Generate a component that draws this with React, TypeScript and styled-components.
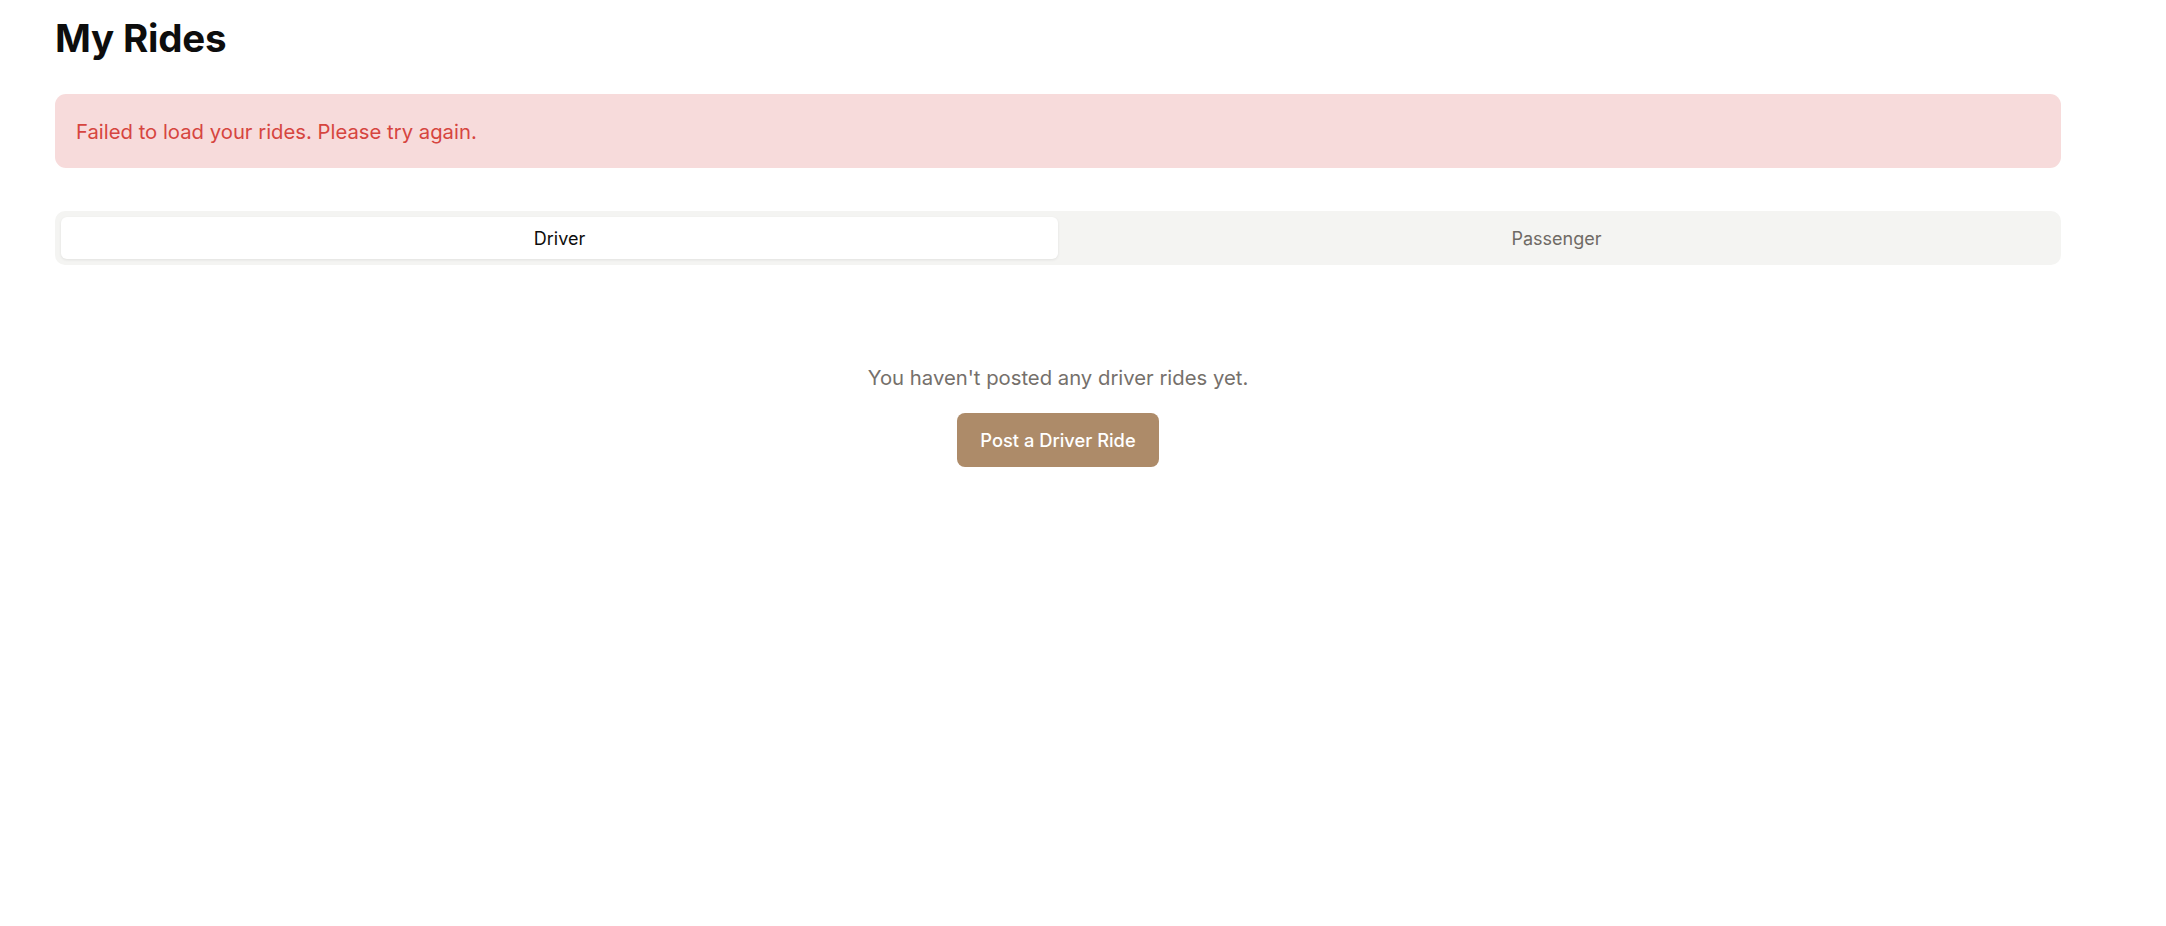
import React, { useState } from "react";
import styled, { createGlobalStyle } from "styled-components";

const GlobalStyle = createGlobalStyle`
  body {
    margin: 0;
    background: #ffffff;
    font-family: Inter, "Noto Sans", sans-serif;
    color: #111111;
  }
`;

const Page = styled.div`
  width: 2006px;
  margin-left: 55px;
  padding-top: 12px;
  display: flex;
  flex-direction: column;
`;

const Title = styled.h1`
  font-size: 38.5px;
  font-weight: 700;
  line-height: 52px;
  margin: 0 0 30px 0;
  color: #0d0d0d;
  letter-spacing: -0.2px;
`;

const ErrorBox = styled.div`
  background: #f7dbdb;
  color: #d6453f;
  border-radius: 11px;
  height: 74px;
  padding: 0 21px;
  display: flex;
  align-items: center;
  font-size: 20.3px;
  margin-bottom: 43px;
`;

const TabList = styled.div`
  background: #f4f4f2;
  border-radius: 10px;
  height: 54px;
  padding: 6px;
  box-sizing: border-box;
  display: grid;
  grid-template-columns: 1fr 1fr;
`;

const Tab = styled.button<{ $active: boolean }>`
  border: none;
  border-radius: 6px;
  font-family: inherit;
  font-size: 18px;
  cursor: pointer;
  background: ${(p) => (p.$active ? "#ffffff" : "transparent")};
  color: ${(p) => (p.$active ? "#0d0d0d" : "#6f6a65")};
  box-shadow: ${(p) => (p.$active ? "0 1px 3px rgba(0,0,0,0.08)" : "none")};
`;

const Empty = styled.div`
  display: flex;
  flex-direction: column;
  align-items: center;
  padding-top: 100px;
  gap: 23px;
`;

const EmptyText = styled.p`
  margin: 0;
  font-size: 20.3px;
  color: #75706b;
`;

const PrimaryButton = styled.button`
  background: #ad8b69;
  color: #ffffff;
  border: none;
  border-radius: 8px;
  height: 54px;
  padding: 0 23px;
  font-family: inherit;
  font-size: 18.3px;
  font-weight: 500;
  cursor: pointer;
`;

const App = () => {
  const [tab, setTab] = useState<"driver" | "passenger">("driver");

  return (
    <Page>
      <GlobalStyle />
      <Title>My Rides</Title>
      <ErrorBox>Failed to load your rides. Please try again.</ErrorBox>
      <TabList>
        <Tab $active={tab === "driver"} onClick={() => setTab("driver")}>
          Driver
        </Tab>
        <Tab $active={tab === "passenger"} onClick={() => setTab("passenger")}>
          Passenger
        </Tab>
      </TabList>
      <Empty>
        <EmptyText>
          {tab === "driver"
            ? "You haven't posted any driver rides yet."
            : "You haven't requested any passenger rides yet."}
        </EmptyText>
        <PrimaryButton>
          {tab === "driver" ? "Post a Driver Ride" : "Request a Ride"}
        </PrimaryButton>
      </Empty>
    </Page>
  );
};

export default App;
